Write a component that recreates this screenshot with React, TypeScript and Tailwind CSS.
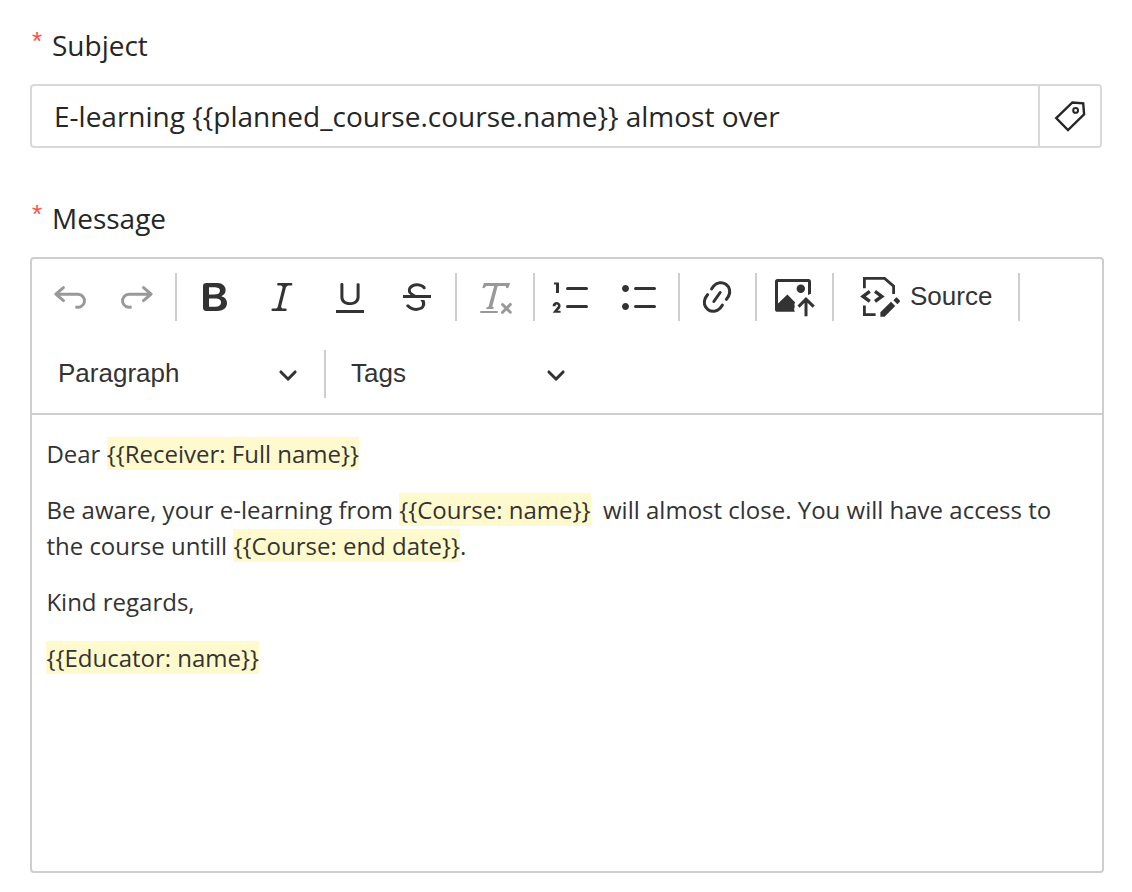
import React from 'react';
import clsx from 'clsx';

const UNDO =
  'm5.042 9.367 2.189 1.837a.75.75 0 0 1-.965 1.149l-3.788-3.18a.747.747 0 0 1-.21-.284.75.75 0 0 1 .17-.945L6.23 4.762a.75.75 0 1 1 .964 1.15L4.863 7.866h8.917A.75.75 0 0 1 14 7.9a4 4 0 1 1-1.477 7.718l.344-1.489a2.5 2.5 0 1 0 1.094-4.73l.008-.032H5.042z';
const REDO =
  'm14.958 9.367-2.189 1.837a.75.75 0 0 0 .965 1.149l3.788-3.18a.747.747 0 0 0 .21-.284.75.75 0 0 0-.17-.945L13.77 4.762a.75.75 0 1 0-.964 1.15l2.331 1.955H6.22A.75.75 0 0 0 6 7.9a4 4 0 1 0 1.477 7.718l-.344-1.489A2.5 2.5 0 1 1 6.039 9.4l-.008-.032h8.927z';
const BOLD =
  'M10.187 17H5.773c-.637 0-1.092-.138-1.364-.415-.273-.277-.409-.718-.409-1.323V4.738c0-.617.14-1.062.419-1.332.279-.27.73-.406 1.354-.406h4.68c.69 0 1.288.041 1.793.124.506.083.96.242 1.36.478.341.197.644.447.906.75a3.262 3.262 0 0 1 .808 2.162c0 1.401-.722 2.426-2.167 3.075C15.05 10.175 16 11.315 16 13.01a3.756 3.756 0 0 1-2.296 3.504 6.1 6.1 0 0 1-1.517.377c-.571.073-1.238.11-2 .11zm-.217-6.217H7v4.087h3.069c1.977 0 2.965-.69 2.965-2.072 0-.707-.256-1.22-.768-1.537-.512-.319-1.277-.478-2.296-.478zM7 5.13v3.619h2.606c.729 0 1.292-.067 1.69-.2a1.6 1.6 0 0 0 .91-.765c.165-.267.247-.566.247-.897 0-.707-.26-1.176-.778-1.409-.519-.232-1.31-.348-2.375-.348H7z';
const ITALIC =
  'm9.586 14.633.021.004c-.036.335.095.655.393.962.082.083.173.15.274.201h1.474a.6.6 0 1 1 0 1.2H5.304a.6.6 0 0 1 0-1.2h1.15c.474-.07.809-.182 1.005-.334.157-.122.291-.32.404-.597l2.416-9.55a1.053 1.053 0 0 0-.281-.823 1.12 1.12 0 0 0-.442-.296H8.15a.6.6 0 0 1 0-1.2h6.443a.6.6 0 1 1 0 1.2h-1.195c-.376.056-.65.155-.823.296-.215.175-.423.439-.623.79l-2.366 9.347z';
const UNDERLINE =
  'M3 18v-1.5h14V18zM5.2 10V3.6c0-.4.4-.6.8-.6.3 0 .7.2.7.6v6.2c0 2 1.3 2.8 3.2 2.8 1.9 0 3.4-.9 3.4-2.9V3.6c0-.3.4-.5.8-.5.3 0 .7.2.7.5V10c0 2.7-2.2 4-4.9 4-2.6 0-4.7-1.2-4.7-4z';
const STRIKE =
  'M7 16.4c-.8-.4-1.5-.9-2.2-1.5a.6.6 0 0 1-.2-.5l.3-.6h1c1 1.2 2.1 1.7 3.7 1.7 1 0 1.8-.3 2.3-.6.6-.4.6-1.2.6-1.3.2-1.2-.9-2.1-.9-2.1h2.1c.3.7.4 1.2.4 1.7v.8l-.6 1.2c-.6.8-1.1 1-1.6 1.2a6 6 0 0 1-2.4.6c-1 0-1.8-.3-2.5-.6zM6.8 9L6 8.3c-.4-.5-.5-.8-.5-1.6 0-.7.1-1.3.5-1.8.4-.6 1-1 1.6-1.3a6.3 6.3 0 0 1 4.7 0 4 4 0 0 1 1.7 1l.3.7c0 .1.2.4-.2.7-.4.2-.9.1-1 0a3 3 0 0 0-1.2-1c-.4-.2-1-.3-2-.4-.7 0-1.4.2-2 .6-.8.6-1 .8-1 1.5 0 .8.5 1 1.2 1.5.6.4 1.1.7 1.9 1H6.8zM3 10.5V9h14v1.5z';
const REMOVE_FORMAT =
  'M8.69 14.915c.053.052.173.083.36.093a.366.366 0 0 1 .345.485l-.003.01a.738.738 0 0 1-.697.497h-2.67a.374.374 0 0 1-.353-.496l.013-.038a.681.681 0 0 1 .644-.458c.197-.012.325-.043.386-.093a.28.28 0 0 0 .072-.11L9.592 4.5H6.269c-.359-.017-.609.013-.75.09-.142.078-.289.265-.442.563-.192.29-.516.464-.864.464H4.17a.43.43 0 0 1-.407-.569L4.46 3h13.08l-.62 2.043a.81.81 0 0 1-.775.574h-.114a.486.486 0 0 1-.486-.486c.001-.284-.054-.464-.167-.54-.112-.076-.367-.106-.766-.091h-3.28l-2.68 10.257c-.006.074.007.127.038.158zM3 17h8a.5.5 0 1 1 0 1H3a.5.5 0 1 1 0-1zm11.299 1.17a.75.75 0 1 1-1.06-1.06l1.414-1.415-1.415-1.414a.75.75 0 0 1 1.06-1.06l1.415 1.414 1.414-1.415a.75.75 0 1 1 1.06 1.06l-1.413 1.415 1.414 1.415a.75.75 0 0 1-1.06 1.06l-1.415-1.414-1.414 1.414z';
const NUMBERED_LIST =
  'M7 5.75c0 .414.336.75.75.75h9.5a.75.75 0 1 0 0-1.5h-9.5a.75.75 0 0 0-.75.75zM3.5 3v5H2V3.7H1v-1h2.5V3zM.343 17.857l2.59-3.257H2.92a.6.6 0 1 0-1.04 0H.302a2 2 0 1 1 3.995 0h-.001c-.048.405-.16.734-.333.988-.175.254-.59.692-1.244 1.312H4.3v1h-4l.043-.043zM7 14.75a.75.75 0 0 1 .75-.75h9.5a.75.75 0 1 1 0 1.5h-9.5a.75.75 0 0 1-.75-.75z';
const BULLETED_LIST =
  'M7 5.75c0 .414.336.75.75.75h9.5a.75.75 0 1 0 0-1.5h-9.5a.75.75 0 0 0-.75.75zm-6 0C1 4.784 1.777 4 2.75 4c.966 0 1.75.777 1.75 1.75 0 .966-.777 1.75-1.75 1.75C1.784 7.5 1 6.723 1 5.75zm6 9c0 .414.336.75.75.75h9.5a.75.75 0 1 0 0-1.5h-9.5a.75.75 0 0 0-.75.75zm-6 0c0-.966.777-1.75 1.75-1.75.966 0 1.75.777 1.75 1.75 0 .966-.777 1.75-1.75 1.75-.966 0-1.75-.777-1.75-1.75z';
const LINK =
  'm11.077 15 .991-1.416a.75.75 0 1 1 1.229.86l-1.148 1.64a.748.748 0 0 1-.217.206 5.251 5.251 0 0 1-8.503-5.955.741.741 0 0 1 .12-.274l1.147-1.639a.75.75 0 1 1 1.228.86L4.933 10.7l.006.003a3.75 3.75 0 0 0 6.132 4.294l.006.004zm5.494-5.335a.748.748 0 0 1-.12.274l-1.147 1.639a.75.75 0 1 1-1.228-.86l.86-1.23a3.75 3.75 0 0 0-6.144-4.301l-.86 1.229a.75.75 0 0 1-1.229-.86l1.148-1.64a.748.748 0 0 1 .217-.206 5.251 5.251 0 0 1 8.503 5.955zm-4.563-2.532a.75.75 0 0 1 .184 1.045l-3.155 4.505a.75.75 0 1 1-1.229-.86l3.155-4.506a.75.75 0 0 1 1.045-.184z';

type ToolButtonProps = {
  label: string;
  path?: string;
  className?: string;
  children?: React.ReactNode;
};

function ToolButton({ label, path, className, children }: ToolButtonProps) {
  return (
    <button type="button" aria-label={label} className={clsx('size-10 shrink-0', className)}>
      <svg viewBox="0 0 20 20" className="size-10 overflow-visible" fill="currentColor">
        {path ? <path d={path} /> : children}
      </svg>
    </button>
  );
}

function Separator({ className }: { className?: string }) {
  return <span className={clsx('h-12 w-0.5 shrink-0 bg-[#ccced1]', className)} />;
}

function Dropdown({ label, className }: { label: string; className?: string }) {
  return (
    <button type="button" className={clsx('flex items-center justify-between', className)}>
      <span className="-mt-0.5">{label}</span>
      <svg viewBox="0 0 10 10" className="-mt-px size-5" fill="currentColor">
        <path d="M.941 4.523a.75.75 0 1 1 1.06-1.06l3.006 3.005 3.005-3.005a.75.75 0 1 1 1.06 1.06l-3.549 3.55a.75.75 0 0 1-1.168-.136L.941 4.523z" />
      </svg>
    </button>
  );
}

function FieldLabel({ children }: { children: string }) {
  return (
    <label className="flex h-11 items-center text-[28px] leading-[44px] text-[#262626]">
      <span className="w-[22px] pb-2 pl-0.5 font-['Liberation_Sans',sans-serif] text-[26px] text-[#ff4d4f]">*</span>
      {children}
    </label>
  );
}

function Placeholder({ children }: { children: string }) {
  return <span className="bg-[#fffacd]">{children}</span>;
}

export default function App() {
  return (
    <div className="h-[892px] w-[1132px] overflow-hidden bg-white pt-[23px] pl-[30px] font-['Open_Sans',sans-serif]">
      {/* Subject */}
      <FieldLabel>Subject</FieldLabel>
      <div className="mt-[17px] flex h-16 w-[1072px] rounded-[4px] border-2 border-[#d9d9d9]">
        <div className="flex flex-1 items-center pl-[22px] text-[28px] text-[#262626]">
          {'E-learning {{planned_course.course.name}} almost over'}
        </div>
        <button type="button" aria-label="Insert tag" className="flex w-[62px] items-center justify-center border-l-2 border-[#d9d9d9]">
          <svg viewBox="0 0 32 32" className="size-8" fill="none" stroke="#262626" strokeWidth="2.4">
            <path d="M2.2 18.1 18.4 2.5l10.8.8.9 11L14 30z" />
            <circle cx="21.6" cy="10.4" r="2.4" strokeWidth="2" />
          </svg>
        </button>
      </div>

      {/* Message */}
      <div className="mt-12">
        <FieldLabel>Message</FieldLabel>
      </div>
      <div className="mt-[17px] h-[616px] w-[1074px] rounded-[4px] border-2 border-[#ccced1] text-[#333]">
        <div className="h-[156px] border-b-2 border-[#ccced1] font-['Liberation_Sans',sans-serif] text-[26px]">
          <div className="flex h-[76px] items-center pl-[18px]">
            <ToolButton label="Undo" path={UNDO} className="text-[#999]" />
            <ToolButton label="Redo" path={REDO} className="ml-[27px] text-[#999]" />
            <Separator className="ml-[18px]" />
            <ToolButton label="Bold" path={BOLD} className="ml-[18px]" />
            <ToolButton label="Italic" path={ITALIC} className="ml-[27px]" />
            <ToolButton label="Underline" path={UNDERLINE} className="ml-7" />
            <ToolButton label="Strikethrough" path={STRIKE} className="ml-[27px]" />
            <Separator className="ml-[18px]" />
            <ToolButton label="Remove format" path={REMOVE_FORMAT} className="ml-[18px] text-[#999]" />
            <Separator className="ml-[18px]" />
            <ToolButton label="Numbered list" path={NUMBERED_LIST} className="ml-[17px]" />
            <ToolButton label="Bulleted list" path={BULLETED_LIST} className="ml-7" />
            <Separator className="ml-[18px]" />
            <ToolButton label="Link" path={LINK} className="ml-[17px]" />
            <Separator className="ml-[18px]" />
            <ToolButton label="Upload image" className="ml-[18px]">
              <path d="M1.2 1h15.6c.7 0 1.2.5 1.2 1.2v6.2l-1.500.6V2.500h-15v10.700l4.700-4.500 3.800 3.900.5-.3c-.8.700-1 1.600-.6 2.400-.5.900-.4 1.900.1 2.700H1.200C.5 17.400 0 16.900 0 16.200V2.200C0 1.500.5 1 1.200 1z" />
              <circle cx="12.900" cy="5.900" r="2.100" />
              <path d="M15.500 18.900v-7.500M12.300 14.300l3.200-3.200 3.300 3.200" fill="none" stroke="currentColor" strokeWidth="1.5" strokeLinecap="square" />
            </ToolButton>
            <Separator className="ml-[17px]" />
            <button type="button" className="ml-[26px] flex items-center">
              <svg viewBox="0 0 20 20" className="size-10 overflow-visible" fill="none" stroke="currentColor" strokeWidth="1.4">
                <path d="M2.200 5.600V.7h10.100l4.500 3.900v3.900M2.200 14.300v4.500h5.600" />
                <path d="M4.900 7.200 1.500 9.700l3.400 2.500M7.500 7.200l3.400 2.500-3.400 2.500" strokeWidth="1.700" />
                <path d="m10.200 17.600 5.300-5.200 2.100 2.100-5.300 5.400h-2.100z" fill="currentColor" stroke="none" />
                <path d="m17.800 10.500c.3-.3.600-.3.900 0l1.100 1.100c.3.300.3.600 0 .9l-1.100 1.100-2-2z" fill="currentColor" stroke="none" />
              </svg>
              <span className="-mt-0.5 ml-2.5">Source</span>
            </button>
            <Separator className="ml-[26px]" />
          </div>
          <div className="flex h-[78px] items-center pl-[26px]">
            <Dropdown label="Paragraph" className="w-60" />
            <Separator className="ml-[26px]" />
            <Dropdown label="Tags" className="ml-[25px] w-[215px]" />
          </div>
        </div>

        {/* Editable area */}
        <div className="space-y-5 px-[14.4px] pt-[21px] text-2xl leading-9">
          <p>
            Dear <Placeholder>{'{{Receiver: Full name}}'}</Placeholder>
          </p>
          <p>
            Be aware, your e-learning from <Placeholder>{'{{Course: name}}'}</Placeholder>&nbsp; will almost close. You will have access to the course untill <Placeholder>{'{{Course: end date}}'}</Placeholder>.
          </p>
          <p>Kind regards,</p>
          <p>
            <Placeholder>{'{{Educator: name}}'}</Placeholder>
          </p>
        </div>
      </div>
    </div>
  );
}
